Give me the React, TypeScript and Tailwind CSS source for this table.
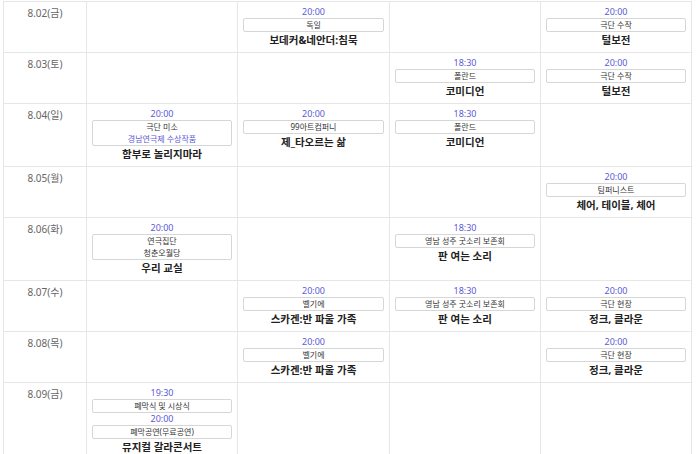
import React from "react";

type Show = {
  time: string;
  box: { text: string; blue?: boolean }[];
  title?: string;
};

type Row = {
  date: string;
  tall?: boolean;
  last?: boolean;
  cells: (Show[] | null)[];
};

const t = (text: string, blue?: boolean) => ({ text, blue });

const rows: Row[] = [
  {
    date: "8.02(금)",
    cells: [
      null,
      [{ time: "20:00", box: [t("독일")], title: "보데커&네안더:침묵" }],
      null,
      [{ time: "20:00", box: [t("극단 수작")], title: "털보전" }],
    ],
  },
  {
    date: "8.03(토)",
    cells: [
      null,
      null,
      [{ time: "18:30", box: [t("폴란드")], title: "코미디언" }],
      [{ time: "20:00", box: [t("극단 수작")], title: "털보전" }],
    ],
  },
  {
    date: "8.04(일)",
    tall: true,
    cells: [
      [
        {
          time: "20:00",
          box: [t("극단 미소"), t("경남연극제 수상작품", true)],
          title: "함부로 놀리지마라",
        },
      ],
      [{ time: "20:00", box: [t("99아트컴퍼니")], title: "제_타오르는 삶" }],
      [{ time: "18:30", box: [t("폴란드")], title: "코미디언" }],
      null,
    ],
  },
  {
    date: "8.05(월)",
    cells: [
      null,
      null,
      null,
      [{ time: "20:00", box: [t("팀퍼니스트")], title: "체어, 테이블, 체어" }],
    ],
  },
  {
    date: "8.06(화)",
    tall: true,
    cells: [
      [{ time: "20:00", box: [t("연극집단"), t("청춘오월당")], title: "우리 교실" }],
      null,
      [{ time: "18:30", box: [t("영남 성주 굿소리 보존회")], title: "판 여는 소리" }],
      null,
    ],
  },
  {
    date: "8.07(수)",
    cells: [
      null,
      [{ time: "20:00", box: [t("벨기에")], title: "스카겐:반 파울 가족" }],
      [{ time: "18:30", box: [t("영남 성주 굿소리 보존회")], title: "판 여는 소리" }],
      [{ time: "20:00", box: [t("극단 현장")], title: "정크, 클라운" }],
    ],
  },
  {
    date: "8.08(목)",
    cells: [
      null,
      [{ time: "20:00", box: [t("벨기에")], title: "스카겐:반 파울 가족" }],
      null,
      [{ time: "20:00", box: [t("극단 현장")], title: "정크, 클라운" }],
    ],
  },
  {
    date: "8.09(금)",
    last: true,
    cells: [
      [
        { time: "19:30", box: [t("폐막식 및 시상식")] },
        { time: "20:00", box: [t("폐막공연(무료공연)")], title: "뮤지컬 갈라콘서트" },
      ],
      null,
      null,
      null,
    ],
  },
];

const colWidths = ["w-[151px]", "w-[152px]", "w-[151px]", "w-[151px]"];

const ShowCell: React.FC<{ shows: Show[] | null }> = ({ shows }) => {
  if (!shows) return null;
  return (
    <div className="pt-[4px] text-center">
      {shows.map((s, i) => (
        <div key={i}>
          <div className="text-[9px] leading-[12px] text-[#5b5bd6]">{s.time}</div>
          <div className="mx-[5px] rounded-[2px] border border-[#d6d6d6] bg-white">
            {s.box.map((b, j) => (
              <div
                key={j}
                className={`text-[8px] leading-[12px] ${b.blue ? "text-[#5b5bd6]" : "text-[#333]"}`}
              >
                {b.text}
              </div>
            ))}
          </div>
          {s.title && (
            <div className="text-[10.5px] font-bold leading-[16px] text-[#222]">{s.title}</div>
          )}
        </div>
      ))}
    </div>
  );
};

export default function App() {
  return (
    <div
      className="h-[454px] w-[700px] overflow-hidden bg-white"
      style={{ fontFamily: '"Noto Sans", "Noto Sans CJK KR", sans-serif' }}
    >
      {/* schedule table */}
      <div className="ml-[3px] mt-[1px] w-[689px] border-l border-t border-[#e6e6e6]">
        {rows.map((r) => (
          <div
            key={r.date}
            className={`flex ${r.last ? "h-[90px]" : r.tall ? "h-[63px]" : "h-[51px]"}`}
          >
            <div className="w-[83px] shrink-0 border-b border-r border-[#e6e6e6] pt-[4px] text-center text-[10px] leading-[14px] text-[#666]">
              {r.date}
            </div>
            {r.cells.map((c, i) => (
              <div key={i} className={`${colWidths[i]} shrink-0 border-b border-r border-[#e6e6e6]`}>
                <ShowCell shows={c} />
              </div>
            ))}
          </div>
        ))}
      </div>
    </div>
  );
}
